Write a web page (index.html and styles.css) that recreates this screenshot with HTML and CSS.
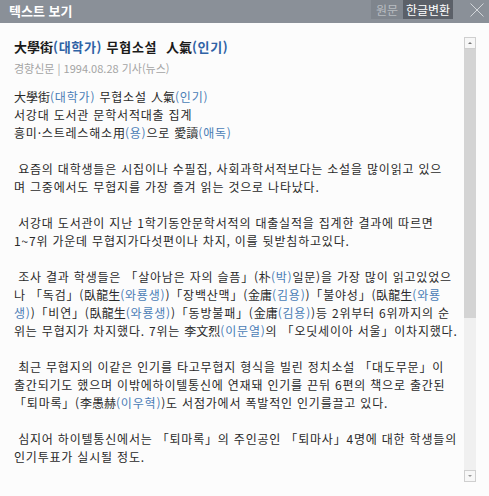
FILE: index.html
```html
<!DOCTYPE html>
<html lang="ko">
<head>
<meta charset="utf-8">
<title>텍스트 보기</title>
<link rel="stylesheet" href="styles.css">
</head>
<body>
<div class="window">
  <header class="bar">
    <h1 class="bar-title">텍스트 보기</h1>
    <div class="bar-tools">
      <button class="tab">원문</button>
      <button class="tab tab-active">한글변환</button>
      <button class="close" aria-label="닫기">
        <svg width="14" height="14" viewBox="0 0 14 14"><path d="M0.5 0.5L13.5 13.5M13.5 0.5L0.5 13.5" stroke="#d2d5d9" stroke-width="1" fill="none"/></svg>
      </button>
    </div>
  </header>
  <div class="main">
    <article class="doc">
      <h2 class="doc-title"><span class="hj">大學街</span><span class="hl">(대학가)</span> 무협소설&nbsp; <span class="hj">人氣</span><span class="hl">(인기)</span></h2>
      <div class="doc-meta">경향신문 | 1994.08.28 기사(뉴스)</div>
      <div class="doc-body">
        <div class="ln"><span class="hj">大學街</span><span class="hl">(대학가)</span> 무협소설 <span class="hj">人氣</span><span class="hl">(인기)</span></div>
        <div class="ln">서강대 도서관 문학서적대출 집계</div>
        <div class="ln">흥미·스트레스해소<span class="hj">用</span><span class="hl">(용)</span>으로 <span class="hj">愛讀</span><span class="hl">(애독)</span></div>
        <div class="ln"></div>
        <div class="ln">&nbsp;요즘의 대학생들은 시집이나 수필집, 사회과학서적보다는 소설을 많이읽고 있으</div>
        <div class="ln">며 그중에서도 무협지를 가장 즐겨 읽는 것으로 나타났다.</div>
        <div class="ln"></div>
        <div class="ln">&nbsp;서강대 도서관이 지난 1학기동안문학서적의 대출실적을 집계한 결과에 따르면</div>
        <div class="ln">1~7위 가운데 무협지가다섯편이나 차지, 이를 뒷받침하고있다.</div>
        <div class="ln"></div>
        <div class="ln">&nbsp;조사 결과 학생들은 「살아남은 자의 슬픔」(<span class="hj">朴</span><span class="hl">(박)</span>일문)을 가장 많이 읽고있었으</div>
        <div class="ln">나 「독검」(<span class="hj">臥龍生</span><span class="hl">(와룡생)</span>)「장백산맥」(<span class="hj">金庸</span><span class="hl">(김용)</span>)「불야성」(<span class="hj">臥龍生</span><span class="hl">(와룡</span></div>
        <div class="ln"><span class="hl">생)</span>)「비연」(<span class="hj">臥龍生</span><span class="hl">(와룡생)</span>)「동방불패」(<span class="hj">金庸</span><span class="hl">(김용)</span>)등 2위부터 6위까지의 순</div>
        <div class="ln">위는 무협지가 차지했다. 7위는 <span class="hj">李文烈</span><span class="hl">(이문열)</span>의 「오딧세이아 서울」이차지했다.</div>
        <div class="ln"></div>
        <div class="ln">&nbsp;최근 무협지의 이같은 인기를 타고무협지 형식을 빌린 정치소설 「대도무문」이</div>
        <div class="ln">출간되기도 했으며 이밖에하이텔통신에 연재돼 인기를 끈뒤 6편의 책으로 출간된</div>
        <div class="ln">「퇴마록」(<span class="hj">李愚赫</span><span class="hl">(이우혁)</span>)도 서점가에서 폭발적인 인기를끌고 있다.</div>
        <div class="ln"></div>
        <div class="ln">&nbsp;심지어 하이텔통신에서는 「퇴마록」의 주인공인 「퇴마사」4명에 대한 학생들의</div>
        <div class="ln">인기투표가 실시될 정도.</div>
      </div>
    </article>
    <div class="scroll">
      <div class="sb-btn"><span class="sb-arrow"></span></div>
      <div class="sb-thumb"></div>
      <div class="sb-track"></div>
      <div class="sb-btn"><span class="sb-arrow sb-arrow-down"></span></div>
    </div>
  </div>
</div>
</body>
</html>
```

FILE: styles.css
```css
* { box-sizing: border-box; }
html, body {
  margin: 0;
  padding: 0;
  background: #fcfcfc;
}
body {
  font-family: "Noto Sans CJK KR", "Noto Sans", sans-serif;
  color: #2a2a2a;
  overflow: hidden;
}
.window {
  width: 489px;
  height: 496px;
  display: flex;
  flex-direction: column;
}
.bar {
  height: 23px;
  flex: none;
  background: #8a9098;
  display: flex;
  align-items: flex-start;
}
.bar-title {
  margin: 0;
  padding-left: 9px;
  font-size: 13px;
  font-weight: bold;
  line-height: 22px;
  color: #ffffff;
}
.bar-tools {
  margin-left: auto;
  display: flex;
  align-items: flex-start;
}
.tab {
  height: 19px;
  border: 0;
  margin: 0;
  padding: 0;
  font-family: inherit;
  font-size: 12px;
  line-height: 19px;
  background: #7f858d;
  color: #b9bdc2;
  width: 32px;
}
.tab-active {
  background: #5b6068;
  color: #ffffff;
  width: 50px;
}
.close {
  border: 0;
  background: transparent;
  padding: 0;
  margin: 3px 5px 0 17px;
  width: 14px;
  height: 14px;
  display: flex;
}
.main {
  flex: 1;
  display: flex;
  min-height: 0;
}
.doc {
  flex: 1;
  padding: 15px 0 0 14px;
  min-width: 0;
}
.doc-title {
  margin: 0;
  font-size: 13px;
  font-weight: bold;
  line-height: 18px;
  letter-spacing: 0.7px;
  color: #1a1a1a;
  white-space: nowrap;
}
.doc-title .hl {
  color: #2f63a6;
}
.doc-meta {
  margin-top: 3px;
  font-size: 11px;
  line-height: 18px;
  color: #a4a4a4;
  white-space: nowrap;
}
.doc-body {
  margin-top: 11px;
  font-size: 12px;
  letter-spacing: 0.8px;
}
.ln {
  height: 18px;
  line-height: 18px;
  white-space: nowrap;
}
.hj {
  letter-spacing: 0;
}
.hl {
  color: #4a7db6;
}
.scroll {
  flex: none;
  width: 12px;
  height: 445px;
  margin: 14px 13px 0 0;
  display: flex;
  flex-direction: column;
}
.sb-btn {
  height: 12px;
  flex: none;
  background: #f7f7f7;
  border: 1px solid #cfcfcf;
  display: flex;
  align-items: center;
  justify-content: center;
}
.sb-arrow {
  width: 0;
  height: 0;
  border-left: 2px solid transparent;
  border-right: 2px solid transparent;
  border-bottom: 2px solid #777777;
}
.sb-arrow-down {
  border-bottom: 0;
  border-top: 2px solid #999999;
}
.sb-thumb {
  height: 269px;
  flex: none;
  background: #d4d4d4;
}
.sb-track {
  flex: 1;
  background: #f0f0f0;
}
```
